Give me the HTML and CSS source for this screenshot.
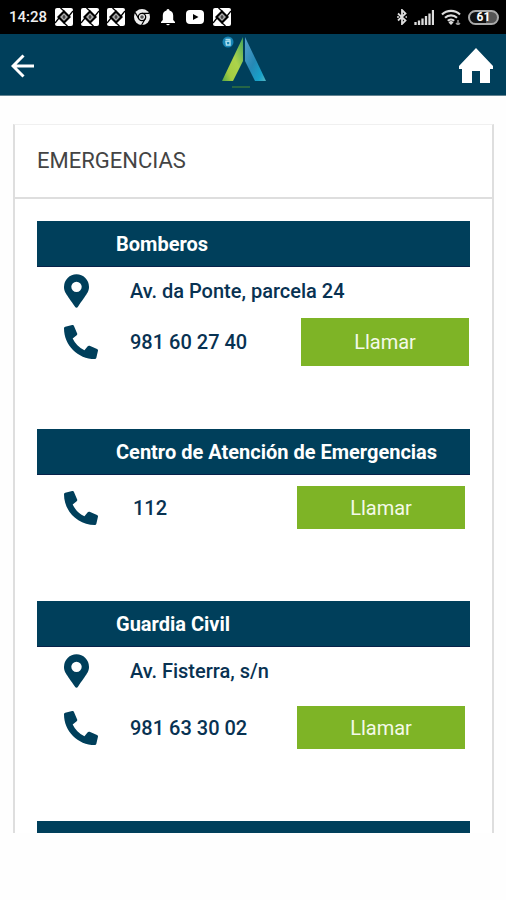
FILE: index.html
```html
<!DOCTYPE html>
<html lang="es">
<head>
<meta charset="utf-8">
<meta name="viewport" content="width=device-width, initial-scale=1">
<title>Emergencias</title>
<link rel="stylesheet" href="styles.css">
</head>
<body>
<svg class="sprite" aria-hidden="true">
  <symbol id="pin" viewBox="0 0 384 512"><path d="M172 502C27 291 0 270 0 192a192 192 0 0 1 384 0c0 78-27 99-172 310a24 24 0 0 1-40 0zM192 272a80 80 0 1 0 0-160 80 80 0 0 0 0 160z"/></symbol>
  <symbol id="phone" viewBox="0 0 512 512"><path d="M497.390 361.800l-112-48a24 24 0 0 0-28 6.900l-49.600 60.600A370.660 370.660 0 0 1 130.600 204.110l60.600-49.600a23.940 23.940 0 0 0 6.900-28l-48-112A24.160 24.160 0 0 0 122.600.610l-104 24A24 24 0 0 0 0 48c0 256.500 207.900 464 464 464a24 24 0 0 0 23.400-18.600l24-104a24.290 24.290 0 0 0-14.010-27.600z"/></symbol>
  <symbol id="tile" viewBox="0 0 18 18"><rect width="18" height="18" rx="2" fill="#fff"/><path d="M9 2l7 7-7 7-7-7z" fill="#000"/><path d="M9 3L5.500 0M14 8l4-5M9 15l3.500 3M4 10l-4 5" stroke="#000" stroke-width="1.300"/><path d="M9 5l4 4-4 4-4-4z" fill="#aaa"/><path d="M9 7v4M7.500 9h3" stroke="#222"/></symbol>
</svg>

<div class="status">
  <span class="clock">14:28</span>
  <div class="notices">
    <svg><use href="#tile"/></svg>
    <svg><use href="#tile"/></svg>
    <svg><use href="#tile"/></svg>
    <svg viewBox="0 0 18 18"><circle cx="9" cy="9" r="8" fill="#eee"/><circle cx="9" cy="9" r="3.700" fill="#eee" stroke="#000" stroke-width="1.300"/><path d="M9 5.300h7.300M5.800 10.800L2.200 4.600M12.200 10.800L8.600 17" stroke="#000" stroke-width="1.200"/><circle cx="9" cy="9" r="1.800" fill="#555"/></svg>
    <svg viewBox="0 0 18 18"><path d="M9 1a1.500 1.500 0 0 0-1.500 1.600C5 3.300 3.800 5.200 3.800 7.500V12L2 14v1h14v-1l-1.800-2V7.500c0-2.300-1.200-4.200-3.700-4.900A1.500 1.500 0 0 0 9 1zM7.200 16a1.900 1.900 0 0 0 3.600 0z" fill="#fff"/></svg>
    <svg class="video" viewBox="0 0 20 18"><rect x="1" y="2" width="18" height="14" rx="4" fill="#fff"/><path d="M8 6l5.500 3L8 12z" fill="#000"/></svg>
    <svg><use href="#tile"/></svg>
  </div>
  <div class="signals">
    <svg class="bluetooth" viewBox="0 0 10 16"><path d="M1 4.500l7.500 7L5 15V1l3.500 3.500-7.500 7" fill="none" stroke="#ddd" stroke-width="1.800"/><path d="M0 8h2M8.500 8h1.500" stroke="#ddd" stroke-width="1.500"/></svg>
    <svg class="bars" viewBox="0 0 20 16"><path d="M1.500 16v-3M5 16v-4.500M8.500 16V9.500M12 16V7M15.500 16V4.500M19 16V1" stroke="#ddd" stroke-width="2.300"/></svg>
    <svg class="wifi" viewBox="0 0 20 16"><path d="M1 5.500a13 13 0 0 1 18 0M4 8.800a8.800 8.800 0 0 1 12 0M6.800 11.700a4.800 4.800 0 0 1 6.400 0" fill="none" stroke="#ddd" stroke-width="2.200"/><path d="M10 16l-2.500-2.600a3.500 3.500 0 0 1 5 0z" fill="#ddd"/><path d="M17 11v5M15 14l2 2 2-2" stroke="#999" stroke-width="1.500" fill="none"/></svg>
    <span class="battery">61</span>
  </div>
</div>

<header class="topbar">
  <button class="nav" type="button" aria-label="Volver"><svg class="back" viewBox="0 0 24 24"><path d="M23 12H2M12.500 1.500L2 12l10.500 10.500" fill="none" stroke="#fff" stroke-width="3"/></svg></button>
  <svg class="logo" viewBox="0 0 46 54" role="img" aria-label="Logotipo">
    <defs>
      <linearGradient id="green" x1="1" y1="0" x2="0" y2="1"><stop offset="0" stop-color="#45a55c"/><stop offset=".45" stop-color="#acd34b"/><stop offset=".75" stop-color="#a4cc42"/><stop offset="1" stop-color="#55a844"/></linearGradient>
      <linearGradient id="blue" x1="0" y1="0" x2="1" y2="1"><stop offset="0" stop-color="#56a0cd"/><stop offset=".5" stop-color="#2688b5"/><stop offset=".8" stop-color="#17a2ca"/><stop offset="1" stop-color="#54b3c0"/></linearGradient>
    </defs>
    <path d="M22 1v24L12 45H1z" fill="url(#green)"/>
    <path d="M24 1l21 44H34L24 25z" fill="url(#blue)"/>
    <circle cx="7" cy="6" r="5.500" fill="#1685b5"/><path d="M4.500 3.500h5M5 5.500l4-.5v4H5.500z" fill="none" stroke="#a9deee" stroke-width="1.500"/>
    <path d="M11 51h18" stroke="#33733f" stroke-width="1.500"/>
  </svg>
  <button class="nav" type="button" aria-label="Inicio"><svg class="home" viewBox="0 0 34 36"><path d="M17 0l17 18v3h-3v14H21V23h-8v12H3V21H0v-3z" fill="#fff"/></svg></button>
</header>

<main class="content">
  <article class="card">
    <h1 class="title">EMERGENCIAS</h1>
    <div class="list">
      <section>
        <h2 class="name">Bomberos</h2>
        <div class="row"><svg class="icon pin"><use href="#pin"/></svg><span class="text">Av. da Ponte, parcela 24</span></div>
        <div class="row call tall"><svg class="icon"><use href="#phone"/></svg><span class="text">981 60 27 40</span><button class="dial" type="button">Llamar</button></div>
      </section>
      <section>
        <h2 class="name">Centro de Atención de Emergencias</h2>
        <div class="row call"><svg class="icon"><use href="#phone"/></svg><span class="text short">112</span><button class="dial" type="button">Llamar</button></div>
      </section>
      <section>
        <h2 class="name">Guardia Civil</h2>
        <div class="row"><svg class="icon pin"><use href="#pin"/></svg><span class="text">Av. Fisterra, s/n</span></div>
        <div class="row call"><svg class="icon"><use href="#phone"/></svg><span class="text">981 63 30 02</span><button class="dial" type="button">Llamar</button></div>
      </section>
      <div class="name"></div>
    </div>
  </article>
</main>
</body>
</html>
```

FILE: styles.css
```css
* { box-sizing: border-box; }

body {
  margin: 0;
  height: 100vh;
  display: flex;
  flex-direction: column;
  overflow: hidden;
  background: #fefefe;
  color: #083252;
  font-family: Roboto, "Liberation Sans", sans-serif;
  font-size: 20px;
}

h1, h2 { margin: 0; }

svg { display: block; flex: none; }

.sprite { position: absolute; width: 0; height: 0; }

button {
  border: 0;
  padding: 0;
  font: inherit;
  cursor: pointer;
}

.status {
  flex: none;
  display: flex;
  align-items: center;
  height: 34px;
  padding: 0 7px 0 9px;
  background: #000;
  color: #eee;
}

.clock {
  width: 46px;
  font-size: 15px;
  font-weight: 500;
}

.notices { display: flex; gap: 8px; }
.notices svg { width: 18px; height: 18px; }
.notices .video { width: 20px; }

.signals {
  display: flex;
  align-items: center;
  gap: 7px;
  margin-left: auto;
}

.bluetooth { width: 10px; height: 16px; }
.bars, .wifi { width: 20px; height: 16px; }

.battery {
  width: 31px;
  height: 15px;
  border: 2px solid #aaa;
  border-radius: 8px;
  background: linear-gradient(90deg, #111 60%, #555 60%);
  color: #fff;
  font-size: 12px;
  font-weight: 700;
  line-height: 11px;
  text-align: center;
}

.topbar {
  flex: none;
  display: flex;
  align-items: flex-start;
  justify-content: space-between;
  height: 62px;
  padding: 2px 13px 0 11px;
  background: #003f5b;
  border-bottom: 1px solid #638391;
}

.nav {
  display: flex;
  align-items: center;
  width: 34px;
  height: 60px;
  background: none;
}

.back { width: 24px; height: 24px; }
.home { width: 34px; height: 36px; }
.logo { width: 46px; height: 54px; margin-right: 16px; }

.content {
  flex: 1;
  min-height: 0;
  margin-bottom: 67px;
  padding: 28px 12px 0 13px;
  overflow: hidden;
}

.card {
  border: solid #dedede;
  border-width: 1px 2px 2px;
  border-top-color: #f0f0f0;
  background: #fff;
}

.title {
  height: 74px;
  padding-left: 22px;
  border-bottom: 2px solid #dedede;
  color: #444;
  font-size: 22px;
  font-weight: 400;
  line-height: 72px;
}

.list { padding: 22px 22px 24px; }

section { margin-bottom: 63px; }

.name {
  height: 46px;
  padding-left: 79px;
  background: #003f5b;
  border-bottom: 1px solid #07224a;
  color: #fff;
  font-size: 20px;
  font-weight: 700;
  line-height: 46px;
}

.row {
  display: flex;
  align-items: center;
  height: 48px;
  padding-left: 27px;
}

.icon {
  width: 34px;
  height: 34px;
  margin-right: 32px;
  fill: #003f5b;
}

.icon.pin { width: 25px; margin-right: 41px; }

.text { font-weight: 500; }
.text.short { padding-left: 3px; }

.row.call { height: 63px; padding: 11px 5px 9px 27px; }
.row.tall { height: 51px; padding: 3px 1px 0 27px; }

.dial {
  align-self: stretch;
  width: 168px;
  margin-left: auto;
  background: #7eb426;
  color: #f4f9e9;
}
```
